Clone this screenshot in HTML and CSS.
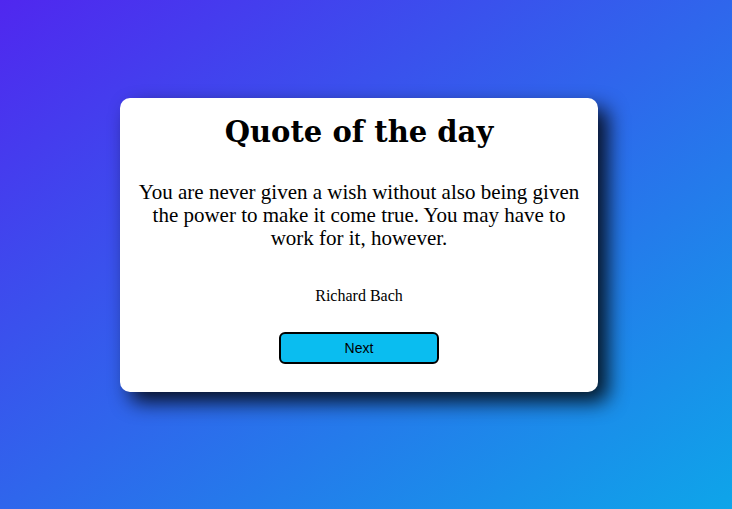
FILE: index.html
```html
<!DOCTYPE html>
<html>
<head>
<meta charset="utf-8">
<link rel="stylesheet" href="styles.css">
</head>
<body>
<main class="page">
  <section class="card">
    <h1 class="title">Quote of the day</h1>
    <p class="quote">You are never given a wish without also being given the power to make it come true. You may have to work for it, however.</p>
    <p class="author">Richard Bach</p>
    <button class="next">Next</button>
  </section>
</main>
</body>
</html>
```
FILE: styles.css
```css
html, body { margin: 0; padding: 0; height: 100%; }
body {
  background: linear-gradient(to bottom right, #5027ef, #0ea5e9);
  font-family: "Liberation Serif", serif;
}
.page {
  height: 100%;
  display: flex;
  align-items: flex-start;
  justify-content: flex-start;
  padding: 98px 0 0 120px;
  box-sizing: border-box;
}
.card {
  width: 478px;
  height: 294px;
  box-sizing: border-box;
  background: #fff;
  border-radius: 10px;
  box-shadow: 10px 10px 20px rgba(0,0,0,0.85);
  display: flex;
  flex-direction: column;
  align-items: center;
  padding: 12px 16px 0;
}
.title {
  margin: 0;
  font-family: "DejaVu Serif", serif;
  font-size: 29px;
  font-weight: bold;
  line-height: 44px;
}
.quote {
  margin: 27px 0 0;
  text-align: center;
  font-size: 21px;
  line-height: 23px;
}
.author {
  margin: 37px 0 0;
  font-size: 16px;
}
.next {
  margin-top: 27px;
  width: 160px;
  height: 32px;
  background: #0abdf0;
  border: 2px solid #000;
  border-radius: 6px;
  font-family: "Liberation Sans", sans-serif;
  font-size: 14px;
  color: #000;
}
```
